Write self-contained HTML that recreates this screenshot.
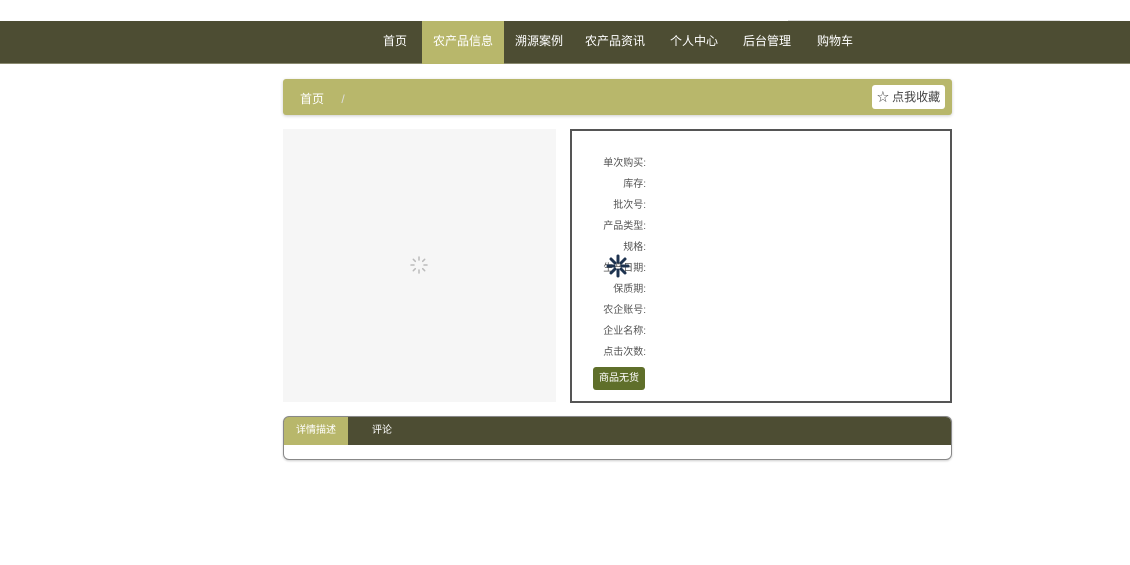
<!DOCTYPE html>
<html><head><meta charset="utf-8"><style>
*{margin:0;padding:0;box-sizing:border-box}
body{width:1130px;height:565px;background:#fff;font-family:"Liberation Sans","Noto Sans CJK SC",sans-serif;position:relative;overflow:hidden}
.nav{position:absolute;left:0;top:21px;width:1130px;height:43px;background:#4d4d33;border-bottom:1px solid #8a8a70}
.nav a{position:absolute;top:0;height:43px;line-height:40px;color:#fff;font-size:12px;text-align:center}
.topline{position:absolute;left:788px;top:20px;width:272px;height:2px;background:#ddd}
.bc{position:absolute;left:283px;top:79px;width:669px;height:36px;background:#b8b76b;border-radius:3px;box-shadow:0 1px 3px rgba(0,0,0,.2)}
.bc span{position:absolute;left:17px;top:11px;color:#fff;font-size:12px}
.fav{position:absolute;right:7px;top:6px;width:73px;height:24px;background:#fff;border-radius:3px;font-size:12px;color:#444;line-height:24px;text-align:center}
.img{position:absolute;left:283px;top:129px;width:273px;height:273px;background:#f6f6f6}
.info{position:absolute;left:570px;top:129px;width:382px;height:274px;border:2px solid #555}
.lb{position:absolute;right:304px;font-size:10px;color:#555;text-align:right;white-space:nowrap}
.btn{position:absolute;left:21px;top:236px;width:52px;height:23px;background:#5f6f2a;border-radius:3px;color:#fff;font-size:10px;line-height:23px;text-align:center}
.tabs{position:absolute;left:283px;top:416px;width:669px;height:44px;border:1px solid #888;border-radius:6px;overflow:hidden;box-shadow:0 1px 2px rgba(0,0,0,.2)}
.th{height:28px;background:#4d4d33;position:relative}
.th span{position:absolute;top:0;height:28px;line-height:28px;font-size:10px;color:#fff}
</style></head><body>
<div class="topline"></div>
<div class="nav">
<a style="left:375px;width:40px">首页</a>
<a style="left:422px;width:82px;background:#b8b76b">农产品信息</a>
<a style="left:510px;width:58px">溯源案例</a>
<a style="left:580px;width:70px">农产品资讯</a>
<a style="left:665px;width:58px">个人中心</a>
<a style="left:738px;width:58px">后台管理</a>
<a style="left:810px;width:50px">购物车</a>
</div>
<div class="bc"><span>首页 <span style="position:static;color:#ddd;margin-left:14px">/</span></span><div class="fav">☆ 点我收藏</div></div>
<div class="img"><svg style="position:absolute;left:127px;top:127px" width="18" height="18" viewBox="0 0 18 18" stroke="#bbb" stroke-width="1.5" stroke-linecap="round"><path d="M9 1v3M9 14v3M1 9h3M14 9h3M3.3 3.3l2 2M12.7 12.7l2 2M3.3 14.7l2-2M12.7 5.3l2-2"/></svg></div>
<div class="info">
<div class="lb" style="top:23px">单次购买:</div>
<div class="lb" style="top:44px">库存:</div>
<div class="lb" style="top:65px">批次号:</div>
<div class="lb" style="top:86px">产品类型:</div>
<div class="lb" style="top:107px">规格:</div>
<div class="lb" style="top:128px">生产日期:</div>
<div class="lb" style="top:149px">保质期:</div>
<div class="lb" style="top:170px">农企账号:</div>
<div class="lb" style="top:191px">企业名称:</div>
<div class="lb" style="top:212px">点击次数:</div>
<svg style="position:absolute;left:34px;top:123px" width="24" height="24" viewBox="0 0 24 24" stroke="#1e3350" stroke-width="3" stroke-linecap="round"><path d="M12 2v6M12 16v6M2 12h6M16 12h6M5 5l4 4M15 15l4 4M5 19l4-4M15 9l4-4"/></svg>
<div class="btn">商品无货</div>
</div>
<div class="tabs"><div class="th"><span style="left:0;width:64px;background:#b8b76b;text-align:center">详情描述</span><span style="left:88px">评论</span></div></div>
</body></html>
